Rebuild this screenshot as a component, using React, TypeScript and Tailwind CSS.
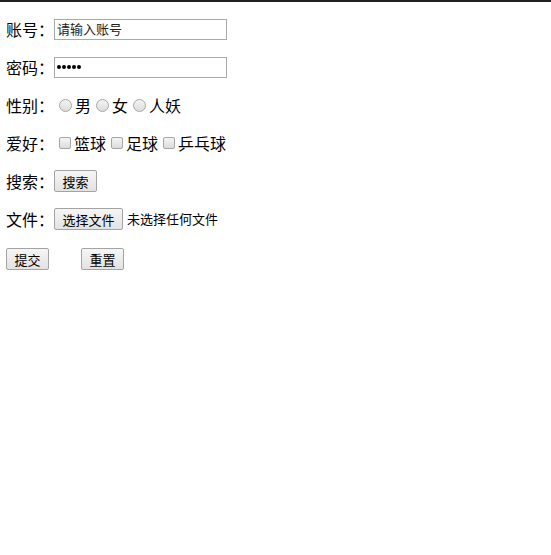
import React from 'react';

const font = 'font-["Microsoft_YaHei","Noto_Sans_CJK_SC",sans-serif]';

const Radio: React.FC = () => (
    <span className="inline-block w-[13px] h-[13px] rounded-full border border-[#a6a6a6] bg-gradient-to-b from-[#f4f4f4] to-[#dcdcdc] ml-[5px] mr-[3px] shrink-0" />
);

const Check: React.FC = () => (
    <span className="inline-block w-[12px] h-[12px] rounded-[2px] border border-[#a6a6a6] bg-gradient-to-b from-[#f4f4f4] to-[#dcdcdc] ml-[5px] mr-[3px] shrink-0" />
);

const Btn: React.FC<{ label: string }> = ({ label }) => (
    <button className="h-[22px] px-[7.5px] text-[13px] leading-none text-black border border-[#a3a3a3] rounded-[2px] bg-gradient-to-b from-[#f6f6f6] to-[#e2e2e2]">
        {label}
    </button>
);

const App: React.FC = () => {
    return (
        <div className={`w-[551px] h-[555px] bg-white text-black text-[16px] ${font}`}>
            <div className="h-[2px] bg-[#1f1f24]" />
            <div className="flex flex-col gap-[16px] pl-[6px] pt-[16px]">
                <div className="flex items-center h-[22px]">
                    <span>账号：</span>
                    <div className="w-[173px] h-[21px] border border-[#a9a9a9] flex items-center px-[2px] text-[13px] text-[#222]">
                        请输入账号
                    </div>
                </div>
                <div className="flex items-center h-[22px]">
                    <span>密码：</span>
                    <div className="w-[173px] h-[21px] border border-[#a9a9a9] flex items-center px-[2px] gap-[1px]">
                        {[0, 1, 2, 3, 4].map((i) => (
                            <span key={i} className="w-[4px] h-[4px] rounded-full bg-black" />
                        ))}
                    </div>
                </div>
                <div className="flex items-center h-[22px]">
                    <span>性别：</span>
                    <Radio />
                    <span>男</span>
                    <Radio />
                    <span>女</span>
                    <Radio />
                    <span>人妖</span>
                </div>
                <div className="flex items-center h-[22px]">
                    <span>爱好：</span>
                    <Check />
                    <span>篮球</span>
                    <Check />
                    <span>足球</span>
                    <Check />
                    <span>乒乓球</span>
                </div>
                <div className="flex items-center h-[22px]">
                    <span>搜索：</span>
                    <Btn label="搜索" />
                </div>
                <div className="flex items-center h-[22px]">
                    <span>文件：</span>
                    <Btn label="选择文件" />
                    <span className="text-[13px] ml-[4px]">未选择任何文件</span>
                </div>
                <div className="flex items-center h-[22px] gap-[32px] mt-[2px]">
                    <Btn label="提交" />
                    <Btn label="重置" />
                </div>
            </div>
        </div>
    );
};

export default App;
